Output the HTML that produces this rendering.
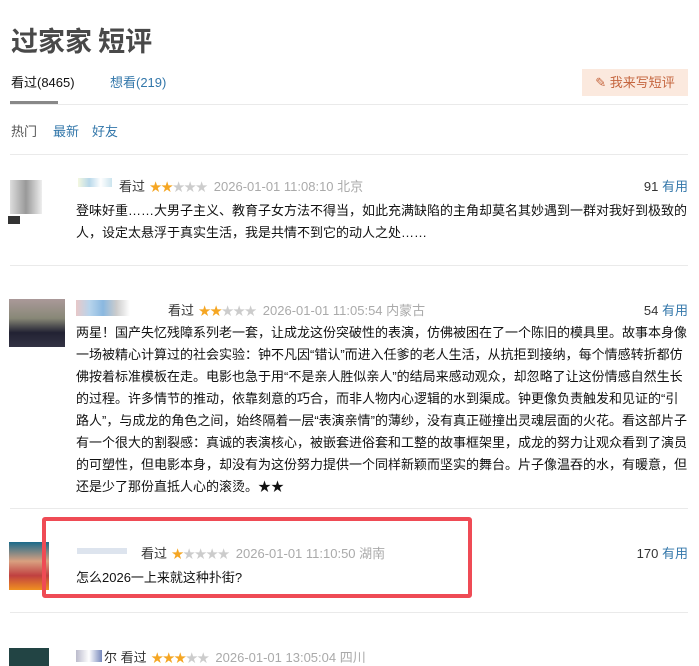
<!DOCTYPE html><html><head><meta charset="utf-8"><style>
body{margin:0;width:699px;height:666px;overflow:hidden;background:#fff;font-family:"Liberation Sans","Noto Sans CJK SC",sans-serif;color:#111;position:relative}
.a{position:absolute;white-space:nowrap}
h1{position:absolute;left:11px;top:20px;margin:0;font-size:27px;color:#494949;font-weight:bold;font-family:"Noto Sans CJK SC",sans-serif}
.line{position:absolute;left:10px;width:678px;height:1px;background:#eaeaea}
.meta{font-size:13px;color:#aaa}
.meta b{font-weight:normal;color:#333}
.st{color:#f5a623;letter-spacing:-0.5px;font-size:12px;margin:0 3px 0 1px}.st i{font-style:normal;color:#ccc}
.txt{position:absolute;left:76px;width:614px;font-size:13px;line-height:22px;color:#111}
.use{font-size:13px;color:#333}.use span{color:#37a}
.blur{position:absolute}
</style></head><body>
<h1>过家家 短评</h1>
<div class="a" style="left:11px;top:72px;font-size:13px;color:#111">看过(8465)</div>
<div class="a" style="left:110px;top:72px;font-size:13px;color:#37a">想看(219)</div>
<div class="a" style="left:10px;top:101px;width:48px;height:4px;background:#888"></div>
<div class="line" style="top:104px"></div>
<div class="a" style="left:582px;top:69px;width:106px;height:27px;background:#fbe9de;color:#c5663f;font-size:13px;line-height:27px;text-align:center">✎ 我来写短评</div>
<div class="a" style="left:11px;top:121px;font-size:13px;color:#555">热门</div>
<div class="a" style="left:53px;top:121px;font-size:13px;color:#37a">最新</div>
<div class="a" style="left:92px;top:121px;font-size:13px;color:#37a">好友</div>
<div class="line" style="top:154px"></div>

<div class="blur" style="left:10px;top:180px;width:32px;height:34px;background:linear-gradient(90deg,#ddd,#999,#eee)"></div>
<div class="blur" style="left:8px;top:216px;width:12px;height:8px;background:#333"></div>
<div class="blur" style="left:78px;top:178px;width:34px;height:9px;background:linear-gradient(90deg,#f4f8e0,#b8d8ea,#fff,#cce4ee)"></div>
<div class="a meta" style="left:119px;top:176px"><b>看过</b> <span class="st">★★<i>★★★</i></span> 2026-01-01 11:08:10 北京</div>
<div class="a use" style="right:11px;top:176px">91 <span>有用</span></div>
<div class="txt" style="top:200px">登味好重……大男子主义、教育子女方法不得当，如此充满缺陷的主角却莫名其妙遇到一群对我好到极致的人，设定太悬浮于真实生活，我是共情不到它的动人之处……</div>
<div class="line" style="top:265px"></div>

<div class="blur" style="left:9px;top:299px;width:56px;height:48px;background:linear-gradient(180deg,#a99,#887 40%,#223 70%,#334)"></div>
<div class="blur" style="left:76px;top:300px;width:54px;height:16px;background:linear-gradient(90deg,#e8c8c8,#b8d4ec,#8ab8e0,#ccc,#fff)"></div>
<div class="a meta" style="left:168px;top:300px"><b>看过</b> <span class="st">★★<i>★★★</i></span> 2026-01-01 11:05:54 内蒙古</div>
<div class="a use" style="right:11px;top:300px">54 <span>有用</span></div>
<div class="txt" style="top:322px">两星！国产失忆残障系列老一套，让成龙这份突破性的表演，仿佛被困在了一个陈旧的模具里。故事本身像一场被精心计算过的社会实验：钟不凡因“错认”而进入任爹的老人生活，从抗拒到接纳，每个情感转折都仿佛按着标准模板在走。电影也急于用“不是亲人胜似亲人”的结局来感动观众，却忽略了让这份情感自然生长的过程。许多情节的推动，依靠刻意的巧合，而非人物内心逻辑的水到渠成。钟更像负责触发和见证的“引路人”，与成龙的角色之间，始终隔着一层“表演亲情”的薄纱，没有真正碰撞出灵魂层面的火花。看这部片子有一个很大的割裂感：真诚的表演核心，被嵌套进俗套和工整的故事框架里，成龙的努力让观众看到了演员的可塑性，但电影本身，却没有为这份努力提供一个同样新颖而坚实的舞台。片子像温吞的水，有暖意，但还是少了那份直抵人心的滚烫。★★</div>
<div class="line" style="top:508px"></div>

<div class="blur" style="left:9px;top:542px;width:40px;height:48px;background:linear-gradient(180deg,#1a6a8a,#d9a080 40%,#c04040 70%,#f09020)"></div>
<div class="blur" style="left:77px;top:548px;width:50px;height:6px;background:#dde4ee"></div>
<div class="a meta" style="left:141px;top:543px"><b>看过</b> <span class="st">★<i>★★★★</i></span> 2026-01-01 11:10:50 湖南</div>
<div class="a use" style="right:11px;top:543px">170 <span>有用</span></div>
<div class="txt" style="top:567px">怎么2026一上来就这种扑街?</div>
<div class="a" style="left:42px;top:517px;width:422px;height:73px;border:4px solid #ef4b55;border-radius:3px"></div>
<div class="line" style="top:612px"></div>

<div class="blur" style="left:9px;top:648px;width:40px;height:18px;background:#244"></div>
<div class="blur" style="left:76px;top:650px;width:26px;height:12px;background:linear-gradient(90deg,#bbc,#fff,#78b)"></div>
<div class="a meta" style="left:104px;top:647px"><b>尔 看过</b> <span class="st">★★★<i>★★</i></span> 2026-01-01 13:05:04 四川</div>
</body></html>
